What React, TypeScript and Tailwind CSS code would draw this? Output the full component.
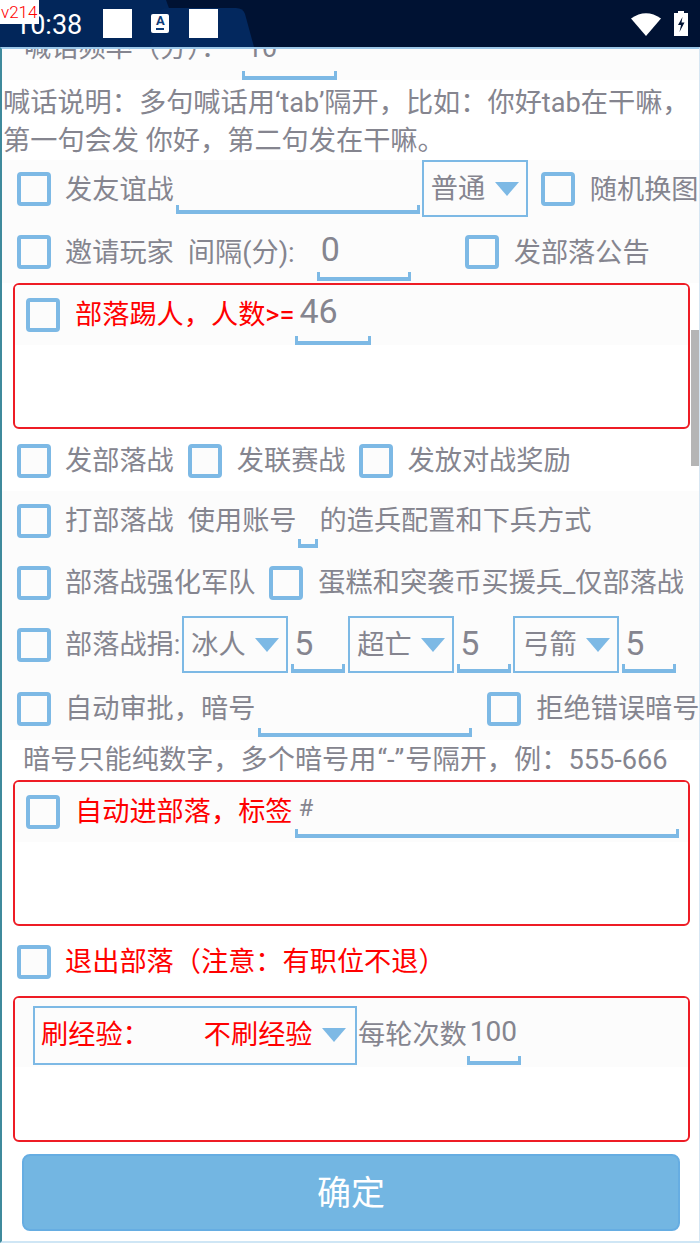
import React from "react";

const Check = ({ className = "" }: { className?: string }) => (
  <span className={`block w-[34px] h-[34px] shrink-0 rounded-[4px] border-[4px] border-[#7db9e5] bg-[#fcfcfc] ${className}`} />
);

const Label = ({ children, className = "" }: { children: React.ReactNode; className?: string }) => (
  <span className={`whitespace-nowrap text-[27.2px] leading-[38px] shrink-0 ${className}`}>{children}</span>
);

const Field = ({ value, className = "", valueClass = "" }: { value?: string; className?: string; valueClass?: string }) => (
  <span className={`relative flex flex-col justify-end shrink-0 ${className}`}>
    {value ? <span className={`whitespace-nowrap ${valueClass}`}>{value}</span> : null}
    <span className="block h-[9px] border-x-[3px] border-b-[4px] border-[#7db9e5] mt-auto" />
  </span>
);

const Select = ({ label, className = "" }: { label: string; className?: string }) => (
  <span className={`flex items-center shrink-0 border-2 border-[#7db9e5] pl-[7px] h-[57px] ${className}`}>
    <span className="whitespace-nowrap text-[27.2px] leading-[38px]">{label}</span>
    <svg className="ml-auto mr-[7px]" width="24" height="14" viewBox="0 0 24 14"><path d="M0 0H24L12 14Z" fill="#7db9e5" /></svg>
  </span>
);

const Row = ({ children, className = "" }: { children: React.ReactNode; className?: string }) => (
  <div className={`flex items-center pl-[15px] bg-[#fcfcfc] ${className}`}>{children}</div>
);

const Box = ({ children, className = "" }: { children: React.ReactNode; className?: string }) => (
  <div className={`ml-[11px] w-[677px] h-[146px] rounded-[6px] border-2 border-[#ee1c25] bg-white overflow-hidden ${className}`}>{children}</div>
);

export default function App() {
  return (
    <div className="relative w-[700px] h-[1243px] overflow-hidden bg-white text-[#85858f] font-['Roboto','Noto_Sans_CJK_SC',sans-serif]">
      <header className="relative h-[47px] bg-[#001233] overflow-hidden">
        <svg className="absolute left-0 top-0" width="260" height="47" viewBox="0 0 260 47">
          <path d="M0 0H166L183 47H0Z" fill="#02265a" />
          <path d="M150 47L160 12Q162 8 168 8H236Q243 8 245 14L254 47Z" fill="#03285e" />
        </svg>
        <div className="relative flex items-center h-full">
          <span className="ml-[15px] pt-[3px] text-white text-[27px] leading-[47px]">10:38</span>
          <span className="ml-[21px] block w-[29px] h-[29px] bg-white" />
          <span className="ml-[19px] flex flex-col items-center justify-start w-[18px] h-[19px] rounded-[2px] bg-white text-[#0b3a78] text-[13px] font-bold leading-[14px]">
            A
            <span className="block w-[8px] h-[2px] bg-[#0b3a78]" />
          </span>
          <span className="ml-[20px] block w-[29px] h-[29px] bg-white" />
          <svg className="ml-auto" width="30" height="24" viewBox="0 0 30 24"><path d="M0 6.5Q15 -4 30 6.5L15 24Z" fill="#fff" /></svg>
          <svg className="ml-[13px] mr-[12px]" width="14" height="25" viewBox="0 0 14 25">
            <path fillRule="evenodd" d="M4 0H10V2H14V25H0V2H4ZM8.5 6L4 14H7L5.5 21L10.5 11.5H7.5Z" fill="#fff" />
          </svg>
        </div>
        <span className="absolute left-0 top-0 w-[39px] h-[24px] bg-white text-[#f00] text-[17px] leading-[25px] pl-[1px] font-light">v214</span>
      </header>

      <main className="relative h-[1196px] border-l-2 border-r border-t-2 border-b-2 border-l-[#3f8a9c] border-r-[#d5e6f3] border-t-[#9cc7e8] border-b-[#cfe6f5] overflow-hidden">
        <div className="h-[31px] bg-[#fcfcfc] pl-[22px] flex overflow-hidden">
          <Label className="-mt-[20px]">喊话频率（分）：</Label>
          <Field value="10" className="ml-[14px] w-[95px] h-[31px]" valueClass="absolute left-[5px] -top-[20px] text-[27px] leading-[38px]" />
        </div>
        <p className="h-[80px] pt-[4px] pl-[1px] text-[27.2px] leading-[38px] whitespace-nowrap">
          喊话说明：多句喊话用‘tab’隔开，比如：你好tab在干嘛，<br />第一句会发 你好，第二句发在干嘛。
        </p>

        <Row className="h-[57px]">
          <Check />
          <Label className="ml-[14px] mt-[3px]">发友谊战</Label>
          <Field className="ml-[2px] w-[244px] self-end h-[20px] mb-[3px]" />
          <Select label="普通" className="ml-[2px] w-[106px]" />
          <Check className="ml-[13px]" />
          <Label className="ml-[15px] mt-[3px]">随机换图</Label>
        </Row>

        <Row className="h-[66px] pt-[4px]">
          <Check />
          <Label className="ml-[14px] mt-[2px]">邀请玩家</Label>
          <Label className="ml-[14px] mt-[2px]">间隔(分):</Label>
          <Field value="0" className="ml-[22px] w-[94px] self-end h-[56px] mb-[2px]" valueClass="pt-[3px] pl-[4px] text-[34px] leading-[42px]" />
          <Check className="ml-[54px]" />
          <Label className="ml-[15px] mt-[2px]">发部落公告</Label>
        </Row>

        <Box>
          <Row className="h-[60px] pl-[12px]">
            <Check className="-ml-[4px]" />
            <Label className="ml-[15px] text-[#f00]">部落踢人，人数&gt;=</Label>
            <Field value="46" className="ml-[1px] w-[76px] self-end h-[58px]" valueClass="pt-[2px] pl-[4px] text-[34px] leading-[44px]" />
          </Row>
        </Box>

        <Row className="h-[62px] bg-white pt-[1px]">
          <Check />
          <Label className="ml-[14px]">发部落战</Label>
          <Check className="ml-[14px]" />
          <Label className="ml-[15px]">发联赛战</Label>
          <Check className="ml-[13px]" />
          <Label className="ml-[15px]">发放对战奖励</Label>
        </Row>

        <Row className="h-[61px] pb-[2px]">
          <Check />
          <Label className="ml-[14px]">打部落战</Label>
          <Label className="ml-[14px]">使用账号</Label>
          <Field className="ml-[1px] w-[20px] self-end h-[10px] mb-[2px]" />
          <Label className="ml-[2px]">的造兵配置和下兵方式</Label>
        </Row>

        <Row className="h-[61px]">
          <Check />
          <Label className="ml-[14px]">部落战强化军队</Label>
          <Check className="ml-[14px]" />
          <Label className="ml-[15px]">蛋糕和突袭币买援兵_仅部落战</Label>
        </Row>

        <Row className="h-[63px]">
          <Check />
          <Label className="ml-[14px] mr-[2px]">部落战捐:</Label>
          <Select label="冰人" className="w-[106px]" />
          <Field value="5" className="ml-[3px] w-[54px] self-end h-[58px] mb-[3px]" valueClass="pt-[7px] pl-[3px] text-[34px] leading-[42px]" />
          <Select label="超亡" className="ml-[3px] w-[106px]" />
          <Field value="5" className="ml-[3px] w-[54px] self-end h-[58px] mb-[3px]" valueClass="pt-[7px] pl-[3px] text-[34px] leading-[42px]" />
          <Select label="弓箭" className="ml-[2px] w-[106px]" />
          <Field value="5" className="ml-[3px] w-[54px] self-end h-[58px] mb-[3px]" valueClass="pt-[7px] pl-[3px] text-[34px] leading-[42px]" />
        </Row>

        <Row className="h-[64px] pt-[2px]">
          <Check />
          <Label className="ml-[14px]">自动审批，暗号</Label>
          <Field className="ml-[3px] w-[214px] self-end h-[14px] mb-[3px]" />
          <Check className="ml-[15px]" />
          <Label className="ml-[15px]">拒绝错误暗号</Label>
        </Row>

        <p className="h-[40px] pt-[1px] pl-[21px] text-[27.2px] leading-[38px] whitespace-nowrap">
          暗号只能纯数字，多个暗号用<span className="px-[1px]">“-”</span>号隔开，例：<span className="tracking-[0px]">555-666</span>
        </p>

        <Box>
          <Row className="h-[60px] pl-[12px]">
            <Check className="-ml-[4px]" />
            <Label className="ml-[15px] text-[#f00]">自动进部落，标签</Label>
            <Field
              value="#"
              className="ml-[2px] w-[384px] self-end h-[60px] mb-[4px]"
              valueClass="pl-[4px] pt-[16px] text-[24px] leading-[28px]"
            />
          </Row>
        </Box>

        <Row className="h-[70px] bg-white pt-[2px]">
          <Check />
          <Label className="ml-[14px] text-[#f00]">退出部落（注意：有职位不退）</Label>
        </Row>

        <Box>
          <Row className="h-[69px] pl-[18px] pt-[5px]">
            <span className="flex items-center shrink-0 border-2 border-[#7db9e5] pl-[6px] h-[59px] w-[324px] text-[#f00]">
              <span className="text-[27.2px] leading-[38px] whitespace-nowrap">刷经验：</span>
              <span className="ml-[54px] text-[27.2px] leading-[38px] whitespace-nowrap">不刷经验</span>
              <svg className="ml-auto mr-[9px]" width="24" height="14" viewBox="0 0 24 14"><path d="M0 0H24L12 14Z" fill="#7db9e5" /></svg>
            </span>
            <Label className="ml-[1px]">每轮次数</Label>
            <Field value="100" className="w-[54px] self-end h-[58px] mb-[2px]" valueClass="pt-[7px] pl-[3px] text-[28px] leading-[36px]" />
          </Row>
        </Box>

        <button className="block ml-[20px] mt-[12px] w-[658px] h-[77px] pt-[2px] rounded-[8px] border-2 border-[#66ade2] bg-[#73b6e2] text-white text-[34px]">确定</button>

        <span className="absolute right-0 top-[281px] w-[8px] h-[136px] bg-[#b5b5b5]" />
      </main>
    </div>
  );
}
